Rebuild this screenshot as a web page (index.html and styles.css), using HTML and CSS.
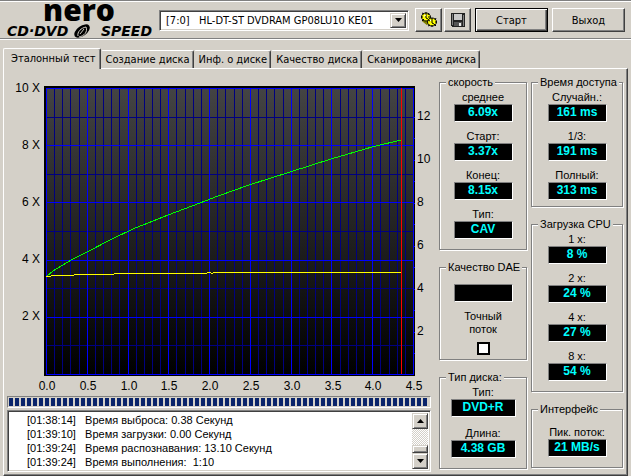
FILE: index.html
```html
<!DOCTYPE html>
<html lang="ru">

<head>
    <meta charset="UTF-8">
    <meta name="viewport" content="width=device-width, initial-scale=1.0">
    <title>Nero CD-DVD Speed</title>
    <link rel="stylesheet" href="styles.css">
</head>

<body>

    <header class="toolbar">
        <svg class="logo" width="150" height="36" viewBox="0 0 150 36" role="img" aria-label="nero CD-DVD Speed">
            <text class="logo-nero" x="74" y="19" text-anchor="middle">nero</text>
            <text class="logo-sub" x="2" y="34">CD·DVD</text>
            <g fill="none">
                <ellipse cx="77" cy="29" rx="9" ry="5" fill="#000" transform="rotate(-36 77 29)" />
                <path d="M73 34C72 30 76 26 81 25M74 35C79 34 83 30 81 25" stroke="#d4d0c8" />
                <path d="M75 32L79 27" stroke="#d4d0c8" />
            </g>
            <text class="logo-sub" x="147" y="34" text-anchor="end">SPEED</text>
        </svg>

        <div class="drive">
            <select class="drive-select" aria-label="Привод">
                <option>[7:0]&nbsp;&nbsp; HL-DT-ST DVDRAM GP08LU10 KE01</option>
            </select>
            <span class="drive-arrow">
                <svg width="7" height="4" viewBox="0 0 7 4"><path d="M0 0h7L3.500 4z" /></svg>
            </span>
        </div>

        <button class="btn btn-icon" aria-label="Настройки">
            <svg width="18" height="18" viewBox="0 0 18 18">
                <g stroke="#000" stroke-width="1">
                    <path d="M3 9l5 4" stroke="#808000" stroke-width="3" />
                    <ellipse cx="6" cy="6" rx="4.500" ry="4" fill="#ff0" />
                    <path d="M2 2l2 1M6 1v2M1 6h2M2 10l2-2M9 2L8 4M10 6H8" fill="none" />
                    <path d="M6 3v4l2 1" fill="none" />
                    <ellipse cx="12" cy="11" rx="4.500" ry="4" fill="#ff0" />
                    <path d="M8 15l2-1M12 16v-2M17 11h-2M16 15l-2-2M16 7l-1 2M8 9l2 1" fill="none" />
                    <path d="M12 7v5l2 1" fill="none" />
                </g>
                <path d="M4 5l2-1M10 10l1-1" stroke="#fff" />
            </svg>
        </button>
        <button class="btn btn-icon" aria-label="Сохранить">
            <svg width="14" height="14" viewBox="0 0 14 14" shape-rendering="crispEdges">
                <path d="M0 0h14v14H1L0 13z" fill="#222" />
                <path d="M1 1h1v11H1zM12 2h1v11h-1z" fill="#808080" />
                <path d="M3 1h8v6H3z" fill="#c8c8c8" />
                <path d="M3 9h8v4H3z" fill="#555" />
                <path d="M8 10h2v3H8z" fill="#eee" />
            </svg>
        </button>
        <button class="btn btn-default">Старт</button>
        <button class="btn">Выход</button>
    </header>

    <nav class="tabs" role="tablist">
        <button class="tab active" role="tab" aria-selected="true">Эталонный тест</button>
        <button class="tab" role="tab">Создание диска</button>
        <button class="tab" role="tab">Инф. о диске</button>
        <button class="tab" role="tab">Качество диска</button>
        <button class="tab" role="tab">Сканирование диска</button>
    </nav>

    <main class="page">
        <section class="left">
            <svg class="chart" viewBox="-1 0 424 316">
                <defs>
                    <linearGradient id="bg" x1="0" y1="0" x2="0" y2="1">
                        <stop offset="0" stop-color="#444" />
                        <stop offset="1" stop-color="#000" />
                    </linearGradient>
                </defs>
                <g shape-rendering="crispEdges">
                    <rect x="36" y="8" width="371" height="290" fill="#000" />
                    <rect x="38" y="10" width="367" height="286" fill="url(#bg)" />
                    <g id="grid"></g>
                    <path class="speed" d="M38 199L45 193L65 181L79 174L102 162L127 150L135 147L160 137L192 125L210 118L241 107L282 94L323 81L364 69L393 62" />
                    <path class="rotation" d="M38 198.500H43M43 197.500H66M66 196.500H106M106 195.500H199M199 194.500H203M203 195.500H205M205 194.500H393" />
                    <path class="cursor" d="M393.500 10V296" />
                </g>
                <g id="labels"></g>
            </svg>

            <progress class="progress" max="100" value="100" aria-label="Ход теста"></progress>

            <div class="log">
                <ul class="log-lines">
                    <li><span>[01:38:14]</span> Время выброса: 0.38 Секунд</li>
                    <li><span>[01:39:10]</span> Время загрузки: 0.00 Секунд</li>
                    <li><span>[01:39:24]</span> Время распознавания: 13.10 Секунд</li>
                    <li><span>[01:39:24]</span> Время выполнения:&nbsp; 1:10</li>
                </ul>
                <div class="scrollbar">
                    <button class="scroll-btn" aria-label="Вверх">
                        <svg width="7" height="4" viewBox="0 0 7 4"><path d="M0 4h7L3.500 0z" /></svg>
                    </button>
                    <div class="scroll-track"><div class="scroll-thumb"></div></div>
                    <button class="scroll-btn" aria-label="Вниз">
                        <svg width="7" height="4" viewBox="0 0 7 4"><path d="M0 0h7L3.500 4z" /></svg>
                    </button>
                </div>
            </div>
        </section>

        <section class="column">
            <fieldset class="group">
                <legend>скорость</legend>
                <label for="avg">среднее</label><output id="avg">6.09x</output>
                <label for="start">Старт:</label><output id="start">3.37x</output>
                <label for="end">Конец:</label><output id="end">8.15x</output>
                <label for="mode">Тип:</label><output id="mode">CAV</output>
            </fieldset>
            <fieldset class="group dae">
                <legend>Качество DAE</legend>
                <output aria-label="Качество DAE"></output>
                <label for="accurate">Точный<br>поток</label>
                <input type="checkbox" id="accurate">
            </fieldset>
            <fieldset class="group disc">
                <legend>Тип диска:</legend>
                <label for="disc">Тип:</label><output id="disc">DVD+R</output>
                <label for="length">Длина:</label><output id="length">4.38 GB</output>
            </fieldset>
        </section>

        <section class="column column-wide">
            <fieldset class="group access">
                <legend>Время доступа</legend>
                <label for="random">Случайн.:</label><output id="random">161 ms</output>
                <label for="third">1/3:</label><output id="third">191 ms</output>
                <label for="full">Полный:</label><output id="full">313 ms</output>
            </fieldset>
            <fieldset class="group">
                <legend>Загрузка CPU</legend>
                <label for="cpu1">1 x:</label><output id="cpu1">8 %</output>
                <label for="cpu2">2 x:</label><output id="cpu2">24 %</output>
                <label for="cpu4">4 x:</label><output id="cpu4">27 %</output>
                <label for="cpu8">8 x:</label><output id="cpu8">54 %</output>
            </fieldset>
            <fieldset class="group interface">
                <legend>Интерфейс</legend>
                <label for="burst">Пик. поток:</label><output id="burst">21 MB/s</output>
            </fieldset>
        </section>
    </main>

    <script src="chart.js"></script>

</body>

</html>
```

FILE: styles.css
```css
* {
    box-sizing: border-box;
}

body {
    margin: 0;
    min-height: 100vh;
    display: flex;
    flex-direction: column;
    background: #d4d0c8;
    color: #000;
    font-family: "Liberation Sans", Arial, sans-serif;
    font-size: 11px;
    border-top: 1px solid #808080;
}

button,
select {
    font-family: "DejaVu Sans Condensed", Tahoma, sans-serif;
    font-size: 11px;
    color: #000;
}

/* top bar */

.toolbar {
    display: flex;
    align-items: center;
    height: 38px;
    padding: 0 6px 0 5px;
    border-top: 1px solid #fff;
    border-bottom: 1px solid #808080;
    box-shadow: 0 1px 0 #fff;
}

.logo {
    flex: none;
    margin-right: 4px;
    overflow: visible;
}

.logo-nero {
    font-family: "Open Sans", sans-serif;
    font-weight: 800;
    font-size: 30px;
}

.logo-sub {
    font-family: "DejaVu Sans", sans-serif;
    font-weight: bold;
    font-style: italic;
    font-size: 14px;
}

.drive {
    flex: 1;
    display: flex;
    height: 21px;
    margin-right: 6px;
    background: #fff;
    border: 1px solid;
    border-color: #808080 #fff #fff #808080;
    box-shadow: inset 1px 1px 0 #404040, inset -1px -1px 0 #d4d0c8;
    padding: 2px;
}

.drive-select {
    flex: 1;
    min-width: 0;
    appearance: none;
    border: none;
    background: none;
    padding: 0 4px;
}

.drive-arrow,
.scroll-btn,
.scroll-thumb {
    display: flex;
    align-items: center;
    justify-content: center;
    width: 16px;
    padding: 0;
    background: #d4d0c8;
    border: 1px solid;
    border-color: #d4d0c8 #404040 #404040 #d4d0c8;
    box-shadow: inset 1px 1px 0 #fff, inset -1px -1px 0 #808080;
}

.btn {
    display: flex;
    align-items: center;
    justify-content: center;
    width: 73px;
    height: 24px;
    padding: 0;
    background: #d4d0c8;
    border: 1px solid;
    border-color: #fff #404040 #404040 #fff;
    box-shadow: inset -1px -1px 0 #808080;
}

.btn-icon {
    width: 27px;
    margin-right: 2px;
}

.btn-default {
    border-color: #000;
    box-shadow: inset 1px 1px 0 #fff, inset -1px -1px 0 #404040, inset -2px -2px 0 #808080;
    margin: 0 4px 0 2px;
}

/* tabs */

.tabs {
    display: flex;
    align-items: flex-end;
    padding: 9px 3px 0;
}

.tab {
    height: 18px;
    padding: 0 3px 0 4px;
    background: #d4d0c8;
    border: 1px solid;
    border-color: #fff #404040 transparent #d4d0c8;
    border-bottom: none;
    border-radius: 2px 2px 0 0;
    box-shadow: inset -1px 0 0 #808080;
    white-space: nowrap;
}

.tab.active {
    height: 21px;
    padding: 0 4px 2px 7px;
    margin-bottom: -1px;
    border-left-color: #fff;
    z-index: 1;
}

.page {
    flex: 1;
    display: flex;
    margin: 0 3px 1px;
    padding: 6px 4px 3px 3px;
    border: 1px solid;
    border-color: #fff #404040 #404040 #fff;
    box-shadow: inset -1px -1px 0 #808080;
}

.left {
    flex: 1;
    min-width: 0;
    display: flex;
    flex-direction: column;
    margin-right: 8px;
}

/* chart */

.chart {
    display: block;
    width: 100%;
    margin: 3px 0 2px;
}

.chart text {
    font-size: 12px;
}

.minor {
    stroke: #000080;
}

.major {
    stroke: #0000ff;
}

.speed,
.rotation,
.cursor {
    fill: none;
    stroke: #00ff00;
}

.rotation {
    stroke: #ffff00;
}

.cursor {
    stroke: #ff0000;
}

.progress {
    appearance: none;
    display: block;
    width: 100%;
    height: 12px;
    border: 1px solid;
    border-color: #808080 #fff #fff #808080;
}

.progress::-webkit-progress-bar {
    background: #d4d0c8;
    padding: 1px;
}

.progress::-webkit-progress-value {
    background: repeating-linear-gradient(to right, #0a246a 0 4px, #d4d0c8 4px 6px);
}

/* log */

.log {
    flex: 1;
    display: flex;
    margin-top: 2px;
    padding: 2px;
    background: #fff;
    border: 1px solid;
    border-color: #808080 #fff #fff #808080;
    box-shadow: inset 1px 1px 0 #404040, inset -1px -1px 0 #d4d0c8;
}

.log-lines {
    flex: 1;
    margin: 0;
    padding: 0 0 0 17px;
    list-style: none;
    line-height: 14px;
}

.log-lines span {
    display: inline-block;
    width: 55px;
}

.scrollbar {
    display: flex;
    flex-direction: column;
    width: 16px;
}

.scroll-btn {
    height: 16px;
}

.scroll-track {
    flex: 1;
    display: flex;
    align-items: flex-end;
    background: repeating-conic-gradient(#fff 0 25%, #d4d0c8 0 50%) 0 0 / 2px 2px;
}

.scroll-thumb {
    height: 8px;
}

/* result groups */

.column {
    display: flex;
    flex-direction: column;
    gap: 10px;
    width: 88px;
    margin-right: 4px;
}

.column-wide {
    width: 92px;
    margin-right: 0;
}

.group {
    display: flex;
    flex-direction: column;
    align-items: center;
    min-width: 0;
    margin: 0;
    padding: 2px 0 10px;
    border: 1px solid #808080;
    box-shadow: inset 1px 1px 0 #fff, 1px 1px 0 #fff;
}

.group legend {
    margin-left: 6px;
    padding: 0 2px;
    line-height: 14px;
    background: #d4d0c8;
    white-space: nowrap;
}

.group label {
    line-height: 13px;
    text-align: center;
}

.group output {
    width: 59px;
    height: 18px;
    margin-bottom: 8px;
    background: #000;
    color: #00ffff;
    border: 1px solid;
    border-color: #808080 #fff #fff #808080;
    font-size: 12px;
    font-weight: bold;
    line-height: 15px;
    text-align: center;
}

.group output:last-child {
    margin-bottom: 0;
}

.access {
    padding-bottom: 6px;
}

.dae {
    padding: 10px 0 4px;
}

.dae input {
    appearance: none;
    width: 13px;
    height: 13px;
    margin: 6px 0 0;
    background: #fff;
    border: 2px solid #000;
}

.disc output {
    width: 65px;
    margin-bottom: 10px;
}

.interface {
    padding-top: 10px;
}
```

FILE: chart.js
```js
const grid = document.getElementById("grid");
const labels = document.getElementById("labels");

function line(x1, y1, x2, y2, cls) {
    grid.innerHTML += `<path class="${cls}" d="M${x1} ${y1}L${x2} ${y2}"/>`;
}

function label(x, y, text, anchor) {
    labels.innerHTML += `<text x="${x}" y="${y}" text-anchor="${anchor}">${text}</text>`;
}

const left = 38.5, right = 405.5, top0 = 10.5, bottom = 296.5;

// minor lines first so that the bright ones stay on top
for (const major of [false, true]) {
    for (let i = 0; i <= 45; i++) {
        if ((i % 5 === 0) !== major) continue;
        const x = Math.floor(left + i * (right - left) / 45) + 0.5;
        line(x, top0, x, bottom, major ? "major" : "minor");
    }
    for (let i = 0; i <= 10; i++) {
        if ((i % 2 === 0) !== major) continue;
        const y = Math.floor(bottom - i * (bottom - top0) / 10) + 0.5;
        line(left - 1, y, right, y, major ? "major" : "minor");
    }
}

// right axis ticks
for (let i = 1; i <= 12; i++) {
    const y = Math.round(bottom - i * 21.500) + 0.5;
    line(right - 1, y, right + 1, y, "major");
}

for (let i = 2; i <= 10; i += 2) {
    label(32, Math.round(bottom - i * 28.600) + 3, i + " X", "end");
}
for (let i = 2; i <= 12; i += 2) {
    label(409, Math.round(bottom - i * 21.500) + 3, i, "start");
}
for (let i = 0; i <= 9; i++) {
    label(Math.round(39 + i * 40.800), 312, (i / 2).toFixed(1), "middle");
}
```
